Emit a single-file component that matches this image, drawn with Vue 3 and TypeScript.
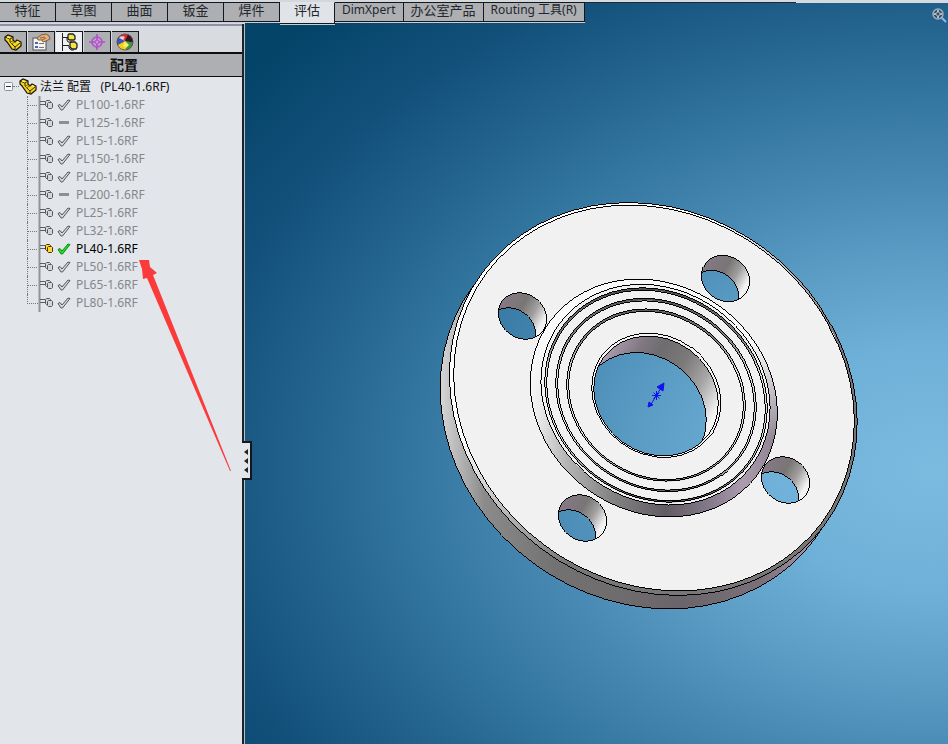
<script setup lang="ts">
import { ref } from 'vue'

interface Hole {
  cx: number
  cy: number
  rx: number
  ry: number
  backX: number
  backY: number
  wall: string
}

interface Configuration {
  name: string
  mark: 'check' | 'dash'
}

const commandTabs = ['特征', '草图', '曲面', '钣金', '焊件', '评估', 'DimXpert', '办公室产品', 'Routing 工具(R)']
const activeTab = ref('评估')

const managerTabs = [
  { id: 'feature', label: 'FeatureManager' },
  { id: 'property', label: 'PropertyManager' },
  { id: 'config', label: 'ConfigurationManager' },
  { id: 'dimxpert', label: 'DimXpertManager' },
  { id: 'display', label: 'DisplayManager' },
]
const activeManager = ref('config')

const configurations: Configuration[] = [
  { name: 'PL100-1.6RF', mark: 'check' },
  { name: 'PL125-1.6RF', mark: 'dash' },
  { name: 'PL15-1.6RF', mark: 'check' },
  { name: 'PL150-1.6RF', mark: 'check' },
  { name: 'PL20-1.6RF', mark: 'check' },
  { name: 'PL200-1.6RF', mark: 'dash' },
  { name: 'PL25-1.6RF', mark: 'check' },
  { name: 'PL32-1.6RF', mark: 'check' },
  { name: 'PL40-1.6RF', mark: 'check' },
  { name: 'PL50-1.6RF', mark: 'check' },
  { name: 'PL65-1.6RF', mark: 'check' },
  { name: 'PL80-1.6RF', mark: 'check' },
]
const activeConfiguration = ref('PL40-1.6RF')
const expanded = ref(true)

// Every circle of the part projects to an ellipse with the same tilt.
const tilt = 36.5
const spin = (cx: number, cy: number): string => `translate(${cx} ${cy}) rotate(${tilt})`
// Brings a gradient given in scene coordinates into the tilted frame of an ellipse.
const unspin = `rotate(${-tilt}) translate(-654 -398)`

const boltHoles: Hole[] = [
  [522.5, 316],
  [725.5, 278.5],
  [785.5, 480],
  [582.5, 518],
].map(([cx, cy]) => ({ cx, cy, rx: 25.2, ry: 22, backX: cx - 11, backY: cy + 15, wall: 'url(#boltWall)' }))

const bore: Hole = { cx: 656, cy: 396, rx: 65, ry: 57, backX: 644, backY: 412.5, wall: 'url(#boreWall)' }
const holes: Hole[] = [...boltHoles, bore]

const grooves = [
  { rx: 115, ry: 101 },
  { rx: 103.5, ry: 91 },
  { rx: 92, ry: 81 },
]
</script>

<template>
  <div class="app">
    <nav class="commands" aria-label="CommandManager">
      <button
        v-for="tab in commandTabs"
        :key="tab"
        type="button"
        class="command"
        :class="{ active: tab === activeTab }"
        @click="activeTab = tab"
      >{{ tab }}</button>
    </nav>

    <aside class="panel">
      <div class="managers">
        <button
          v-for="m in managerTabs"
          :key="m.id"
          type="button"
          class="manager"
          :class="{ active: m.id === activeManager }"
          :aria-label="m.label"
          @click="activeManager = m.id"
        >
          <svg v-if="m.id === 'feature'" width="20" height="18" viewBox="0 0 20 18">
            <path d="M2 4l3-2 5 2v3l2 2 2-2 4 2v4l-5 4-4-1-5-7-2-2z" fill="#f3d422" stroke="#1b1700" stroke-width="1.200" />
            <path d="M2 4l5 2v3l5 5 5-4M7 6l3-2M12 14v2" fill="none" stroke="#3a3000" />
            <path d="M7 9l3-1M8 11l4-2" stroke="#8d7300" />
            <path d="M4 4l3 1M14 8.500l2 1" stroke="#fffbb0" />
          </svg>
          <svg v-else-if="m.id === 'property'" width="20" height="18" viewBox="0 0 20 18">
            <rect x="2" y="5" width="13" height="12" fill="#f4f4f0" stroke="#555" />
            <path d="M4 9h3v2H4zM4 13h3v2H4z" fill="#4a67b5" />
            <path d="M8 10.500h5M8 14.500h5" stroke="#777" />
            <path d="M6 5l4-3 5-1 3 2 1 3-4 2-3 1-1-2-4 0z" fill="#e6b17c" stroke="#6b4522" stroke-width=".8" />
            <path d="M9 5l5-1M11 7l4-2" stroke="#7b4f28" stroke-width=".8" />
          </svg>
          <svg v-else-if="m.id === 'config'" width="20" height="18" viewBox="0 0 20 18">
            <path d="M3.500 0v18M4 4.500h5M4 12.500h6" fill="none" stroke="#222" />
            <path d="M9 2l1-1h4l2 2v3l-1 1h-4L9 6zM11 10l1-1h4l2 2v3l-1 2h-4l-2-2z" fill="#f5e540" stroke="#222" stroke-width="1.300" />
            <path d="M8 5v2l1 2h4M10 13v2l2 2h3" fill="none" stroke="#222" />
          </svg>
          <svg v-else-if="m.id === 'dimxpert'" width="20" height="18" viewBox="0 0 20 18">
            <circle cx="10" cy="9" r="5" fill="none" stroke="#b44fd0" stroke-width="1.6" />
            <path d="M10 1v16M2 9h16" stroke="#b44fd0" stroke-width="1.6" />
            <circle cx="10" cy="9" r="2" fill="#d58be8" stroke="#b44fd0" />
          </svg>
          <svg v-else width="20" height="18" viewBox="0 0 20 18">
            <circle cx="10" cy="9" r="8" fill="#d92b2b" />
            <path d="M10 8l3-6.500a8 8 0 0 1 5 8z" fill="#331626" />
            <path d="M10 8l8 1.500a8 8 0 0 1-7 7.500z" fill="#3d9a3b" />
            <path d="M10 8l1 9a8 8 0 0 1-8.500-5z" fill="#f2cf1d" />
            <path d="M10 8l-7.500 4a8 8 0 0 1 1-8z" fill="#3657b8" />
            <path d="M10 8l4 4-3 3-3-2z" fill="#f8ee6a" />
            <path d="M10 8L4 5l2-2z" fill="#c9c9e2" />
            <circle cx="10" cy="9" r="8" fill="none" stroke="#5b4a4a" stroke-width=".8" />
            <circle cx="8" cy="4.500" r="1.6" fill="#fff" opacity=".7" />
          </svg>
        </button>
      </div>

      <h1 class="title">配置</h1>

      <div class="tree">
        <div class="root">
          <button type="button" class="toggle" aria-label="展开或折叠" :aria-expanded="expanded" @click="expanded = !expanded">
            <svg width="9" height="9" viewBox="0 0 9 9">
              <rect x=".5" y=".5" width="8" height="8" rx="1" fill="#fafafa" stroke="#8e9196" />
              <path d="M2 4.500h5" stroke="#333" />
              <path v-if="!expanded" d="M4.500 2v5" stroke="#333" />
            </svg>
          </button>
          <span class="stub"></span>
          <svg class="part" width="18" height="17" viewBox="0 0 18 17">
            <path d="M1 3l3-2 5 2v3l2 2 2-2 4 2v4l-5 4-4-1-5-7-2-2z" fill="#f3d422" stroke="#1b1700" stroke-width="1.200" />
            <path d="M1 3l5 2v3l5 5 5-4M6 5l3-2M11 13v2" fill="none" stroke="#3a3000" />
            <path d="M6 8l3-1M7 10l4-2" stroke="#8d7300" />
            <path d="M3 3l3 1M13 7.500l2 1" stroke="#fffbb0" />
          </svg>
          <span class="root-name">法兰 配置 &nbsp;&nbsp;(PL40-1.6RF)</span>
        </div>

        <ul v-if="expanded" class="configs">
          <li v-for="c in configurations" :key="c.name" class="config">
            <span class="leader"></span>
            <button
              type="button"
              class="entry"
              :class="{ current: c.name === activeConfiguration }"
              @click="activeConfiguration = c.name"
            >
              <svg class="node" width="16" height="18" viewBox="0 0 16 18">
                <path class="rail" d="M1.500 0v18" />
                <path class="arm" d="M2 5.500h5l1 1M2 8.500h5" />
                <path class="block" d="M7.500 5.500l1-1h3l1 1v4l-1 1h-3l-1-1z" />
                <path class="block" d="M9.500 7.500l1-1h3l1 1v4l-1 1h-3l-1-1z" />
              </svg>
              <svg class="mark" width="14" height="14" viewBox="0 0 14 14">
                <path v-if="c.mark === 'check'" class="tick" d="M1 7.500l2-1 2 2.500 6-7 2 .5-7.500 9.500H4z" />
                <path v-else d="M2 6.500h10" stroke="#8d8f92" stroke-width="3" />
              </svg>
              <span>{{ c.name }}</span>
            </button>
          </li>
        </ul>
      </div>

      <button type="button" class="splitter" aria-label="隐藏面板">
        <svg width="6" height="26" viewBox="0 0 6 26">
          <path d="M5 1v6L1 4zM5 10v6l-4-3zM5 19v6l-4-3z" fill="#222" />
        </svg>
      </button>
      <svg class="pointer" width="94" height="214" viewBox="139 259 94 214">
        <path d="M139 260h10l1 7 7 6-4 2 78 196h-1l-83-193-4 1-1-10z" fill="#fb3a3a" />
      </svg>
    </aside>

    <main class="scene">
      <svg class="model" viewBox="245 3 703 741" role="img" aria-label="法兰">
        <defs>
          <linearGradient id="rim" gradientUnits="userSpaceOnUse" :gradientTransform="unspin" x1="440" y1="0" x2="857" y2="0">
            <stop offset="0" stop-color="#e8e8e8" />
            <stop offset=".05" stop-color="#c4c4c4" />
            <stop offset=".13" stop-color="#8b8b8b" />
            <stop offset=".3" stop-color="#737272" />
            <stop offset=".6" stop-color="#6a656a" />
            <stop offset=".8" stop-color="#7b707a" />
            <stop offset=".93" stop-color="#aa9bac" />
            <stop offset="1" stop-color="#c8c0ca" />
          </linearGradient>
          <linearGradient id="rimChamfer" gradientUnits="userSpaceOnUse" :gradientTransform="unspin" x1="450" y1="440" x2="560" y2="570">
            <stop offset="0" stop-color="#fff" />
            <stop offset=".5" stop-color="#bdbdbd" />
            <stop offset="1" stop-color="#777" />
          </linearGradient>
          <linearGradient id="hub" gradientUnits="userSpaceOnUse" :gradientTransform="unspin" x1="530" y1="0" x2="778" y2="0">
            <stop offset="0" stop-color="#f4f4f4" />
            <stop offset=".15" stop-color="#b4b4b4" />
            <stop offset=".32" stop-color="#858585" />
            <stop offset=".55" stop-color="#625c62" />
            <stop offset=".72" stop-color="#83798a" />
            <stop offset=".86" stop-color="#ab9bae" />
            <stop offset="1" stop-color="#8d8390" />
          </linearGradient>
          <linearGradient id="hubLight" gradientUnits="userSpaceOnUse" :gradientTransform="unspin" x1="0" y1="340" x2="0" y2="440">
            <stop offset="0" stop-color="#fafafa" />
            <stop offset="1" stop-color="#fafafa" stop-opacity="0" />
          </linearGradient>
          <linearGradient id="boltWall" x1="0" y1=".5" x2="1" y2=".4">
            <stop offset="0" stop-color="#857985" />
            <stop offset=".4" stop-color="#797575" />
            <stop offset=".65" stop-color="#a09e9e" />
            <stop offset=".9" stop-color="#f2f2f2" />
          </linearGradient>
          <linearGradient id="boreWall" x1="0" y1=".5" x2="1" y2=".4">
            <stop offset="0" stop-color="#ab9bae" />
            <stop offset=".2" stop-color="#817882" />
            <stop offset=".35" stop-color="#6f6c6f" />
            <stop offset=".55" stop-color="#7b7979" />
            <stop offset=".75" stop-color="#a6a4a4" />
            <stop offset=".95" stop-color="#f4f4f4" />
          </linearGradient>
          <linearGradient id="groove" gradientUnits="userSpaceOnUse" :gradientTransform="unspin" x1="0" y1="290" x2="0" y2="500">
            <stop offset="0" stop-color="#4a4a4a" />
            <stop offset=".25" stop-color="#777" />
            <stop offset=".4" stop-color="#dedede" />
            <stop offset=".7" stop-color="#dedede" />
            <stop offset="1" stop-color="#5a5a5a" />
          </linearGradient>
          <clipPath v-for="(h, i) in holes" :id="`hole${i}`" :key="i">
            <ellipse :rx="h.rx" :ry="h.ry" :transform="spin(h.cx, h.cy)" />
          </clipPath>
          <mask id="openings" maskUnits="userSpaceOnUse" x="245" y="3" width="703" height="741">
            <rect x="245" y="3" width="703" height="741" fill="#fff" />
            <g v-for="(h, i) in holes" :key="i" :clip-path="`url(#hole${i})`">
              <ellipse :rx="h.rx" :ry="h.ry" :transform="spin(h.backX, h.backY)" fill="#000" />
            </g>
          </mask>
        </defs>

        <g mask="url(#openings)">
          <ellipse class="edge rim" rx="212.600" ry="187" :transform="spin(644, 412.5)" />
          <ellipse rx="212.600" ry="187" :transform="spin(653.3, 399)" fill="url(#rimChamfer)" />
          <ellipse class="edge" rx="212.600" ry="187" :transform="spin(653.3, 399)" />
          <ellipse class="edge face" rx="209" ry="183.500" :transform="spin(654, 398)" />

          <ellipse rx="129" ry="113" :transform="spin(653.8, 398)" fill="url(#hub)" />
          <ellipse class="edge light" rx="129" ry="113" :transform="spin(653.8, 398)" />
          <ellipse class="edge face" rx="119.500" ry="105" :transform="spin(655.5, 394.7)" />

          <g v-for="g in grooves" :key="g.rx">
            <ellipse class="cut" :rx="g.rx" :ry="g.ry" :transform="spin(656, 395.2)" />
            <ellipse class="edge" :rx="g.rx + 1" :ry="g.ry + 1" :transform="spin(656, 395)" />
            <ellipse class="edge" :rx="g.rx - 1" :ry="g.ry - 1" :transform="spin(656, 395.5)" />
          </g>

          <ellipse class="edge chamfer" rx="67.400" ry="59.200" :transform="spin(656.3, 395.3)" />
          <ellipse v-for="(h, i) in holes" :key="i" :rx="h.rx" :ry="h.ry" :transform="spin(h.cx, h.cy)" :fill="h.wall" />
        </g>

        <g v-for="(h, i) in holes" :key="i" :clip-path="`url(#hole${i})`">
          <ellipse class="edge" :rx="h.rx" :ry="h.ry" :transform="spin(h.backX, h.backY)" />
        </g>
        <ellipse v-for="(h, i) in holes" :key="`rim${i}`" class="edge" :rx="h.rx" :ry="h.ry" :transform="spin(h.cx, h.cy)" />

        <g class="origin">
          <path d="M650 406l12-20M652 395.500h9M656.500 391v9M653.500 392.500l6 6M659.500 392.500l-6 6" />
          <path d="M664 383l-1 8-6-4zM648 407l1-5 4 3z" fill="#1212ee" />
        </g>
      </svg>
      <button type="button" class="zoom" aria-label="缩放">
        <svg width="18" height="18" viewBox="0 0 18 18">
          <path d="M11 11l5 5" stroke="#8fb6ee" stroke-width="2" />
          <circle cx="8" cy="8" r="5" fill="#31506b" stroke="#9fadb8" stroke-width="1.500" />
          <path d="M8 4v2M8 10v2M4 8h2M10 8h2" stroke="#dde4ea" stroke-width="1.500" />
          <circle cx="8" cy="8" r="2" fill="none" stroke="#a8b4be" />
        </svg>
      </button>
    </main>
  </div>
</template>

<style>
body {
  margin: 0;
}
</style>

<style scoped>
.app {
  display: grid;
  grid-template-columns: 245px minmax(0, 1fr);
  grid-template-rows: 24px minmax(0, 1fr);
  height: 100vh;
  overflow: hidden;
  background: linear-gradient(90deg, #1b2a33 84%, #d6dade 84%) 0 2px / 100% 1px no-repeat #d6dade;
  font-family: "Noto Sans", "Noto Sans CJK SC", sans-serif;
  font-size: 12px;
  color: #111;
}

button {
  margin: 0;
  padding: 0;
  border: 0;
  background: none;
  font: inherit;
  color: inherit;
}

.commands {
  grid-area: 1 / 1 / 2 / 3;
  z-index: 2;
  display: flex;
  align-items: flex-start;
  justify-self: start;
  border-top: 2px solid #d3d8dc;
}

.command {
  box-sizing: border-box;
  height: 20px;
  padding: 0 7px 4px;
  border: solid #14181c;
  border-width: 1px 1px 1px 0;
  background: #adafb3;
  box-shadow: 0 1px #c9ced3;
  color: #23272b;
  line-height: 14px;
  white-space: nowrap;
}

.command:nth-child(-n + 6) {
  width: 56px;
  padding: 0 0 4px;
  font-size: 13px;
}

.command:nth-child(6) {
  width: 55px;
}

.command:nth-child(8) {
  font-size: 13px;
}

.command.active {
  height: 22px;
  padding-bottom: 6px;
  border-top-color: #e0e4e9;
  background: #e0e4e9;
}

.panel {
  grid-area: 2 / 1 / 3 / 2;
  position: relative;
  z-index: 1;
  box-sizing: border-box;
  display: flex;
  flex-direction: column;
  min-height: 0;
  border-right: 1px solid #b4bcc4;
  background: #e2e5ea;
  box-shadow: inset -2px 0 #1c2328;
}

.managers {
  display: flex;
  gap: 1px;
  margin-right: 2px;
  padding-top: 5px;
  border-top: 2px solid #8d90a8;
  border-bottom: 2px solid #0c0e10;
  background: #d8dbe0;
}

.manager {
  display: flex;
  align-items: center;
  justify-content: center;
  box-sizing: border-box;
  width: 27px;
  height: 21px;
  border: solid #14181c;
  border-width: 1px 1px 0 0;
  background: #adafb3;
}

.manager.active {
  background: #eef0f4;
}

.title {
  margin: 0 2px 0 0;
  padding-left: 6px;
  border-bottom: 1px solid #0c0e10;
  background: #adafb3;
  font-size: 14px;
  font-weight: 700;
  line-height: 22px;
  text-align: center;
}

.tree {
  padding-left: 4px;
}

.root {
  display: flex;
  align-items: center;
  height: 18px;
  margin-bottom: 1px;
}

.toggle {
  display: flex;
}

.stub {
  width: 6px;
  border-top: 1px dotted #777;
}

.root-name {
  margin-left: 3px;
  white-space: pre;
}

.configs {
  margin: 0 0 0 23px;
  padding: 0;
  list-style: none;
}

.config {
  display: flex;
  height: 18px;
}

.leader {
  box-sizing: border-box;
  width: 11px;
  height: 10px;
  border-bottom: 1px dotted #777;
  border-left: 1px dotted #777;
}

.config:not(:last-child) .leader {
  height: 18px;
  border-bottom: 0;
  background: repeating-linear-gradient(90deg, #777 0 1px, transparent 1px 2px) 0 9px / 100% 1px no-repeat;
}

.entry {
  display: flex;
  align-items: center;
  height: 18px;
  color: #85878a;
  line-height: 18px;
}

.entry.current {
  color: #000;
}

.mark {
  margin: 0 5px 0 3px;
}

.rail {
  stroke: #909397;
  stroke-width: 2;
}

.arm {
  fill: none;
  stroke: #5b5e61;
}

.block {
  fill: #d4d6d9;
  stroke: #55585b;
}

.tick {
  fill: #d4d6d9;
  stroke: #55585b;
}

.current .block {
  fill: #ffd83a;
  stroke: #443500;
}

.current .tick {
  fill: #22e022;
  stroke: #0a8a14;
}

.splitter {
  position: absolute;
  top: 417px;
  right: -8px;
  display: flex;
  align-items: center;
  justify-content: center;
  box-sizing: border-box;
  width: 10px;
  height: 39px;
  border: solid #14181c;
  border-width: 2px 2px 2px 0;
  background: #e2e5ea;
}

.pointer {
  position: absolute;
  top: 235px;
  left: 139px;
}

.scene {
  grid-area: 1 / 2 / 3 / 3;
  position: relative;
  margin-top: 3px;
  min-height: 0;
  background: radial-gradient(ellipse 112% 76% at 98% 63%, #7cbbe0 0%, #6fb0d8 22%, #5b9cc5 38%, #4788b2 52%, #32759f 67%, #20608a 82%, #12507a 95%, #054469 112%);
}

.model {
  display: block;
  width: 100%;
  height: 100%;
}

.edge {
  fill: none;
  stroke: #000;
  shape-rendering: crispEdges;
}

.rim {
  fill: url(#rim);
}

.face {
  fill: #f1f1f1;
}

.light {
  fill: url(#hubLight);
}

.chamfer {
  fill: #f4f4f4;
}

.cut {
  fill: none;
  stroke: url(#groove);
  stroke-width: 2;
}

.origin {
  fill: none;
  stroke: #1212ee;
}

.zoom {
  position: absolute;
  top: 3px;
  right: 0;
  display: flex;
}
</style>
